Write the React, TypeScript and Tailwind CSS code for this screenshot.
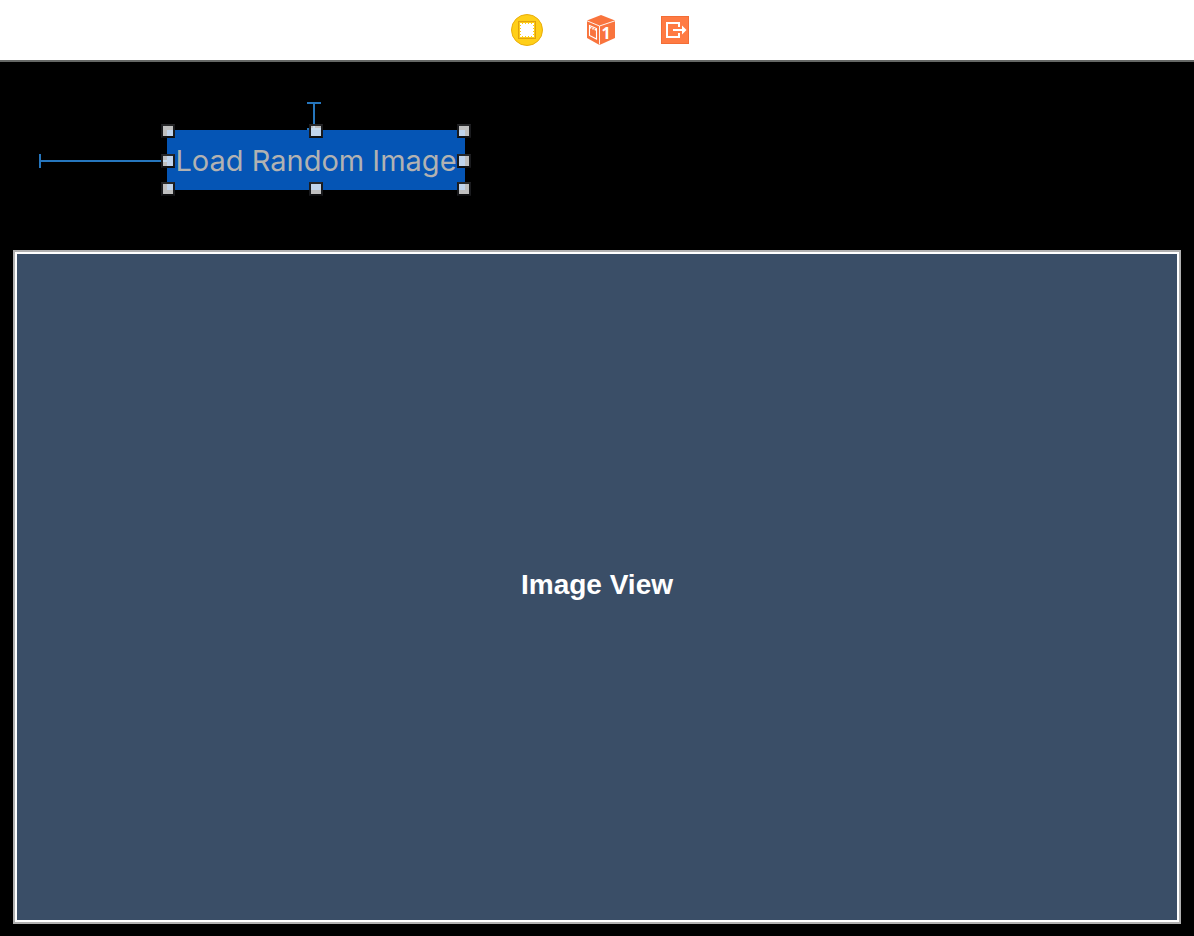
import React from "react";

const handlePositions = [
  "-left-1.5 -top-1.5",
  "left-1/2 -top-1.5 -translate-x-1/2",
  "-right-1.5 -top-1.5",
  "-left-1.5 top-6",
  "-right-1.5 top-6",
  "-left-1.5 -bottom-1.5",
  "left-1/2 -bottom-1.5 -translate-x-1/2",
  "-right-1.5 -bottom-1.5",
];

function ViewControllerIcon() {
  return (
    <svg width="34" height="34" viewBox="0 0 34 34" aria-hidden="true">
      <circle cx="17" cy="17" r="15.5" fill="#ffcf18" stroke="#eaae0c" />
      <rect x="8.5" y="8.5" width="17" height="17" fill="#fccb17" stroke="#e2a20c" />
      <rect x="11" y="11" width="12" height="12" fill="#fff" />
      <path
        d="M10 10.5H24M10 23.5H24M10.5 10V24M23.5 10V24"
        fill="none"
        stroke="#fff"
        strokeDasharray="2 1"
      />
    </svg>
  );
}

function FirstResponderIcon() {
  return (
    <svg width="34" height="34" viewBox="0 0 34 34" aria-hidden="true">
      <path d="M17 2 31 7.5V25L15.5 32 3 25V7.5Z" fill="#f9743d" />
      <path d="M3 7.8 15.5 13 31 7.8M15.5 13V31.5" fill="none" stroke="#fff" strokeWidth="0.9" />
      <path d="M5.5 12.5 12.5 15.5V26L5.5 22.5Z" fill="none" stroke="#fff" strokeWidth="1.1" />
      <path d="M6 14.5 12 17" fill="none" stroke="#fff" strokeWidth="1.5" strokeDasharray="1.5 1" />
      <text x="22" y="26" textAnchor="middle" fill="#fff" className="font-['Open_Sans',sans-serif] text-[16px] font-bold">
        1
      </text>
    </svg>
  );
}

function ExitIcon() {
  return (
    <svg width="34" height="34" viewBox="0 0 34 34" aria-hidden="true">
      <rect x="3" y="3" width="28" height="28" fill="#ff7b43" />
      <rect x="3.5" y="3.5" width="27" height="27" fill="none" stroke="#f36d36" />
      <path d="M21 14V10H9V24H21V20" fill="none" stroke="#fff" strokeWidth="2" />
      <path d="M15 17H27" fill="none" stroke="#fff" strokeWidth="2" />
      <path d="M24 12.5 28.5 17 24 21.5Z" fill="#fff" />
    </svg>
  );
}

export default function App() {
  return (
    <div className="flex min-h-screen flex-col bg-black">
      <header className="flex h-[62px] items-center justify-center gap-10 border-b-2 border-[#666866] bg-white pl-2">
        <button type="button" aria-label="View Controller"><ViewControllerIcon /></button>
        <button type="button" aria-label="First Responder"><FirstResponderIcon /></button>
        <button type="button" aria-label="Exit"><ExitIcon /></button>
      </header>
      <main className="flex grow flex-col px-[13px] pb-3">
        <div className="flex h-[188px] items-start pl-[26px] pt-[68px]">
          <div className="flex h-[60px] items-center pt-0.5">
            <div className="h-3.5 w-0.5 bg-[#2676bd]" />
            <div className="h-0.5 w-[126px] bg-[#2676bd]" />
          </div>
          <div className="relative">
            <button
              type="button"
              className="h-[60px] w-[298px] whitespace-nowrap bg-[#0555b5] pt-0.5 text-center font-['Inter',sans-serif] text-[29px] leading-9 text-[#b2b2b2]"
            >
              Load Random Image
            </button>
            <svg className="absolute -top-7 left-[140px]" width="14" height="28" viewBox="0 0 14 28" aria-hidden="true">
              <path d="M0 1H14M7 1V27M0 27H14" fill="none" stroke="#2676bd" strokeWidth="2" />
            </svg>
            {handlePositions.map((position) => (
              <span
                key={position}
                className={`absolute size-3.5 border-2 border-x-[#1a1b1e] border-t-[#262729] border-b-[#0e0f11] bg-white/75 bg-clip-padding ${position}`}
              />
            ))}
          </div>
        </div>
        <section className="flex grow flex-col border-2 border-[#b0b0b0]">
          <div className="flex grow items-center justify-center border-2 border-white bg-[#3a4e67] pb-1">
            <h1 className="font-['Liberation_Sans',Arial,sans-serif] text-[28px] font-bold leading-8 text-white">
              Image View
            </h1>
          </div>
        </section>
      </main>
    </div>
  );
}
